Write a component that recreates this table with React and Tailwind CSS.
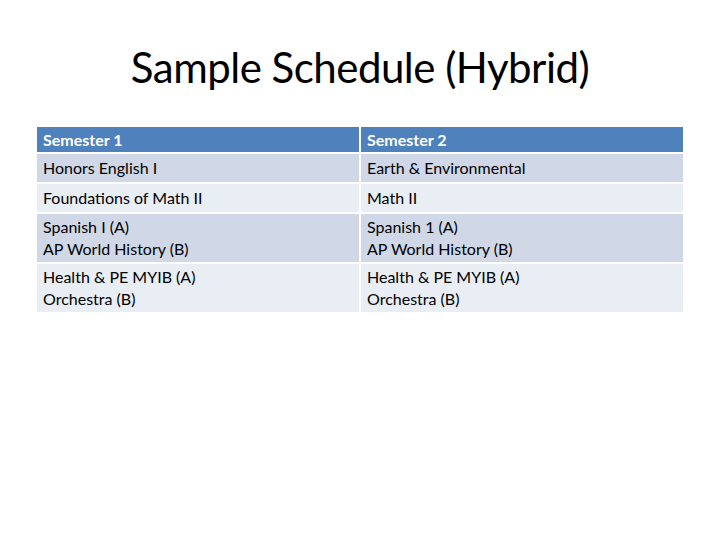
import React from "react";

const rows = [
  { bg: "bg-[#d0d8e8]", h: "h-[28px]", left: ["Honors English I"], right: ["Earth & Environmental"] },
  { bg: "bg-[#e9edf4]", h: "h-[28px]", left: ["Foundations of Math II"], right: ["Math II"] },
  { bg: "bg-[#d0d8e8]", h: "h-[48px]", left: ["Spanish I (A)", "AP World History (B)"], right: ["Spanish 1 (A)", "AP World History (B)"] },
  { bg: "bg-[#e9edf4]", h: "h-[48px]", left: ["Health & PE MYIB (A)", "Orchestra (B)"], right: ["Health & PE MYIB (A)", "Orchestra (B)"] },
];

export default function App() {
  return (
    <div className="w-[720px] h-[540px] bg-white font-['Lato',sans-serif] text-black">
      {/* title */}
      <h1 className="pt-[40px] text-center text-[42px] leading-[54px] font-normal tracking-[-0.5px]">
        Sample Schedule (Hybrid)
      </h1>

      {/* table */}
      <div className="mt-[33px] mx-[37px] w-[646px] flex flex-col gap-[2px] text-[16px] leading-[22px]">
        <div className="grid grid-cols-[322px_322px] gap-[2px] h-[25px]">
          <div className="bg-[#4f81bd] text-white font-bold px-[6px] flex items-center">Semester 1</div>
          <div className="bg-[#4f81bd] text-white font-bold px-[6px] flex items-center">Semester 2</div>
        </div>
        {rows.map((r, i) => (
          <div key={i} className={`grid grid-cols-[322px_322px] gap-[2px] ${r.h}`}>
            <div className={`${r.bg} px-[6px] flex flex-col justify-center`}>
              {r.left.map((t) => (
                <div key={t}>{t}</div>
              ))}
            </div>
            <div className={`${r.bg} px-[6px] flex flex-col justify-center`}>
              {r.right.map((t) => (
                <div key={t}>{t}</div>
              ))}
            </div>
          </div>
        ))}
      </div>
    </div>
  );
}
